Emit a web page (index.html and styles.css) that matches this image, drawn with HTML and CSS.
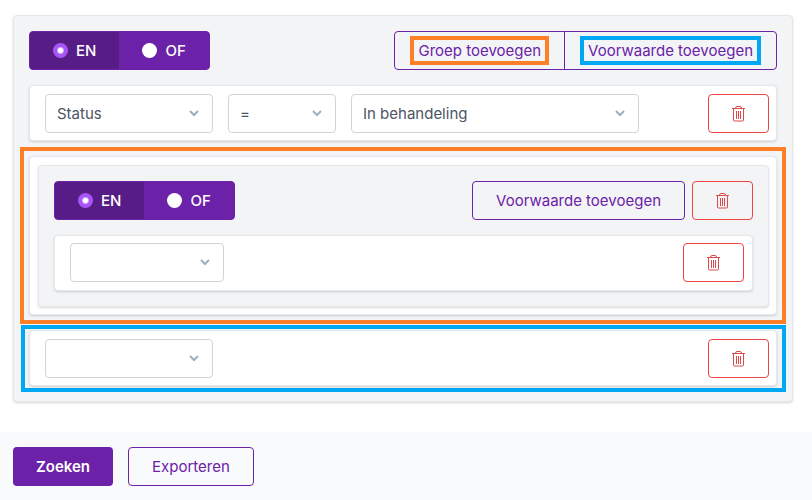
FILE: index.html
```
<!DOCTYPE html>
<html lang="nl">
<head>
    <meta charset="UTF-8">
    <meta name="viewport" content="width=device-width, initial-scale=1.0">
    <title>Zoeken</title>
    <link rel="stylesheet" href="styles.css">
</head>
<body>

    <svg class="sprite" aria-hidden="true">
        <symbol id="trash" viewBox="0 0 13 16">
            <path d="M0 2.5h13M1.5 3v11q0 1 1 1h8q1 0 1-1V3M3.5 2.5q0-2 1.500-2h3q1.500 0 1.500 2M4.500 5v8M6.500 5v8M8.500 5v8" fill="none" stroke="currentColor" stroke-width="1"/>
        </symbol>
    </svg>

    <form class="page">
        <main class="main">
            <section class="group">
                <div class="group-header">
                    <div class="toggle" role="radiogroup" aria-label="Operator">
                        <label><input type="radio" name="operator" checked>EN</label>
                        <label><input type="radio" name="operator">OF</label>
                    </div>
                    <div class="btn-group">
                        <button type="button" class="btn btn-outline"><span class="mark mark-group">Groep toevoegen</span></button>
                        <button type="button" class="btn btn-outline"><span class="mark mark-rule">Voorwaarde toevoegen</span></button>
                    </div>
                </div>

                <div class="card rule">
                    <div class="fields">
                        <select aria-label="Veld">
                            <option>Status</option>
                        </select>
                        <select aria-label="Vergelijking">
                            <option>=</option>
                        </select>
                        <select aria-label="Waarde">
                            <option>In behandeling</option>
                        </select>
                    </div>
                    <button type="button" class="btn btn-delete" aria-label="Verwijderen"><svg><use href="#trash"/></svg></button>
                </div>

                <div class="card nested outline-group">
                    <section class="group">
                        <div class="group-header">
                            <div class="toggle" role="radiogroup" aria-label="Operator">
                                <label><input type="radio" name="operator2" checked>EN</label>
                                <label><input type="radio" name="operator2">OF</label>
                            </div>
                            <div class="actions">
                                <button type="button" class="btn btn-outline">Voorwaarde toevoegen</button>
                                <button type="button" class="btn btn-delete" aria-label="Verwijderen"><svg><use href="#trash"/></svg></button>
                            </div>
                        </div>

                        <div class="card rule">
                            <div class="fields">
                                <select aria-label="Veld">
                                    <option></option>
                                </select>
                            </div>
                            <button type="button" class="btn btn-delete" aria-label="Verwijderen"><svg><use href="#trash"/></svg></button>
                        </div>
                    </section>
                </div>

                <div class="card rule outline-rule">
                    <div class="fields">
                        <select aria-label="Veld">
                            <option></option>
                        </select>
                    </div>
                    <button type="button" class="btn btn-delete" aria-label="Verwijderen"><svg><use href="#trash"/></svg></button>
                </div>
            </section>
        </main>

        <footer class="footer">
            <button type="submit" class="btn btn-primary">Zoeken</button>
            <button type="button" class="btn btn-outline">Exporteren</button>
        </footer>
    </form>

</body>
</html>
```
FILE: styles.css
```
* {
    box-sizing: border-box;
}

body {
    margin: 0;
    background-color: white;
    font-family: Inter, sans-serif;
    font-size: 15px;
    line-height: 23px;
    color: #4b5563;
}

.sprite {
    position: absolute;
    width: 0;
    height: 0;
}

.page {
    display: flex;
    flex-direction: column;
    min-height: 100vh;
}

.main {
    padding: 15px 19px 30px 13px;
}

/* groups and cards */
.group,
.card {
    border: 1px solid #e5e7eb;
    border-radius: 4px;
    box-shadow: 0 1px 3px rgba(0, 0, 0, 0.1), 0 1px 2px rgba(0, 0, 0, 0.06);
}

.group {
    display: flex;
    flex-direction: column;
    gap: 15px;
    padding: 15px;
    background-color: #f3f4f6;
}

.group-header {
    display: flex;
    justify-content: space-between;
    align-items: center;
}

.card {
    position: relative;
    background-color: white;
}

.rule {
    display: flex;
    gap: 15px;
    padding: 8px 7px 7px 15px;
}

.group .group .rule {
    padding: 7px 8px 8px 15px;
}

.nested {
    padding: 8px 7px 7px 8px;
}

.fields {
    flex: 1;
    display: grid;
    grid-template-columns: 56fr 36fr 96fr 13fr;
    gap: 15px;
}

select {
    appearance: none;
    width: 100%;
    height: 39px;
    padding: 0 36px 0 11px;
    border: 1px solid #d1d5db;
    border-radius: 4px;
    background: white url("data:image/svg+xml,%3Csvg xmlns='http://www.w3.org/2000/svg' width='10' height='7'%3E%3Cpath d='M1 1l4 4 4-4' fill='none' stroke='%23a0aec0' stroke-width='2'/%3E%3C/svg%3E") no-repeat right 13px center;
    font: inherit;
    color: inherit;
}

/* EN / OF switch */
.toggle {
    display: flex;
    height: 39px;
    border: 1px solid #6b21a8;
    border-radius: 4px;
    overflow: hidden;
    background-color: #6b21a8;
    color: white;
    font-weight: 500;
}

.toggle label {
    display: flex;
    align-items: center;
    gap: 8px;
    padding: 0 23px;
    cursor: pointer;
}

.toggle label:has(input:checked) {
    background-color: #581c87;
}

.toggle input {
    appearance: none;
    width: 15px;
    height: 15px;
    margin: 0;
    border-radius: 50%;
    background-color: white;
}

.toggle input:checked {
    background: radial-gradient(circle, white 2px, #a855f7 4px);
}

/* buttons */
.btn {
    height: 39px;
    padding: 0 23px;
    border: 1px solid transparent;
    border-radius: 4px;
    background: transparent;
    font: inherit;
    white-space: nowrap;
    cursor: pointer;
}

.btn-outline {
    border-color: #6b21a8;
    color: #6b21a8;
}

.btn-primary {
    padding: 0 22px;
    background-color: #6b21a8;
    color: white;
    font-weight: 600;
}

.btn-delete {
    width: 61px;
    border-color: #ef4444;
    color: #dc4a4a;
}

.btn-delete svg {
    display: block;
    width: 13px;
    height: 16px;
}

.btn-group {
    display: flex;
}

.btn-group .btn:first-child {
    margin-right: -1px;
    border-radius: 4px 0 0 4px;
}

.btn-group .btn:last-child {
    border-radius: 0 4px 4px 0;
}

.actions {
    display: flex;
    gap: 7px;
}

/* coloured frames that link a button to what it adds */
.mark {
    position: relative;
}

.mark::after,
.outline-group::after,
.outline-rule::after {
    content: "";
    position: absolute;
    inset: -10px;
    border: 4px solid #ff7f27;
    pointer-events: none;
}

.mark::after {
    inset: -5px -8px;
}

.mark-rule::after,
.outline-rule::after {
    border-color: #00a8f3;
}

.outline-rule::after {
    inset: -6px -10px -7px -9px;
}

.footer {
    flex: 1;
    display: flex;
    gap: 15px;
    padding: 15px 13px 14px;
    background-color: #f9fafc;
}
```
